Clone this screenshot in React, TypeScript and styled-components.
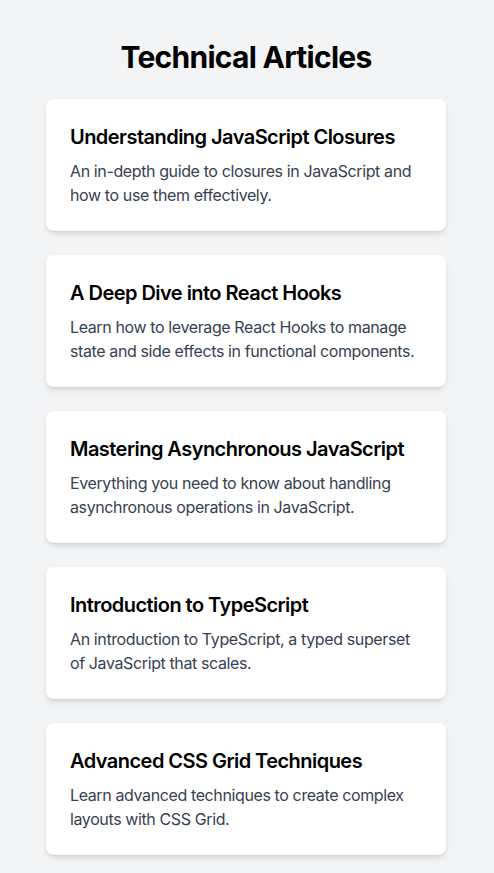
import React from "react";
import styled, { createGlobalStyle } from "styled-components";

const GlobalStyle = createGlobalStyle`
  html, body { margin: 0; padding: 0; background: #f3f4f6; }
  body { font-family: Inter, "Noto Sans", sans-serif; -webkit-font-smoothing: antialiased; }
`;

const Page = styled.main`
  min-height: 873px;
  box-sizing: border-box;
  padding: 39px 48px 18px 46px;
  display: flex;
  flex-direction: column;
  align-items: center;
`;

const Heading = styled.h1`
  margin: 0 0 24px;
  font-size: 30px;
  line-height: 36px;
  font-weight: 700;
  color: #000;
  letter-spacing: -0.024em;
`;

const List = styled.div`
  width: 400px;
  display: flex;
  flex-direction: column;
  gap: 24px;
`;

const Card = styled.article`
  background: #fff;
  border-radius: 8px;
  padding: 24px;
  box-shadow: 0 4px 6px -1px rgba(0,0,0,0.1), 0 2px 4px -2px rgba(0,0,0,0.1);
`;

const Title = styled.h2`
  margin: 0 0 8px;
  font-size: 20px;
  line-height: 28px;
  font-weight: 600;
  color: #000;
  letter-spacing: -0.027em;
`;

const Desc = styled.p`
  margin: 0;
  font-size: 16px;
  line-height: 24px;
  color: #374151;
  letter-spacing: -0.024em;
`;

const articles = [
  { t: "Understanding JavaScript Closures", d: "An in-depth guide to closures in JavaScript and how to use them effectively." },
  { t: "A Deep Dive into React Hooks", d: "Learn how to leverage React Hooks to manage state and side effects in functional components." },
  { t: "Mastering Asynchronous JavaScript", d: "Everything you need to know about handling asynchronous operations in JavaScript." },
  { t: "Introduction to TypeScript", d: "An introduction to TypeScript, a typed superset of JavaScript that scales." },
  { t: "Advanced CSS Grid Techniques", d: "Learn advanced techniques to create complex layouts with CSS Grid." },
];

export default function App() {
  return (
    <>
      <GlobalStyle />
      <Page>
        <Heading>Technical Articles</Heading>
        <List>
          {articles.map((a) => (
            <Card key={a.t}>
              <Title>{a.t}</Title>
              <Desc>{a.d}</Desc>
            </Card>
          ))}
        </List>
      </Page>
    </>
  );
}
